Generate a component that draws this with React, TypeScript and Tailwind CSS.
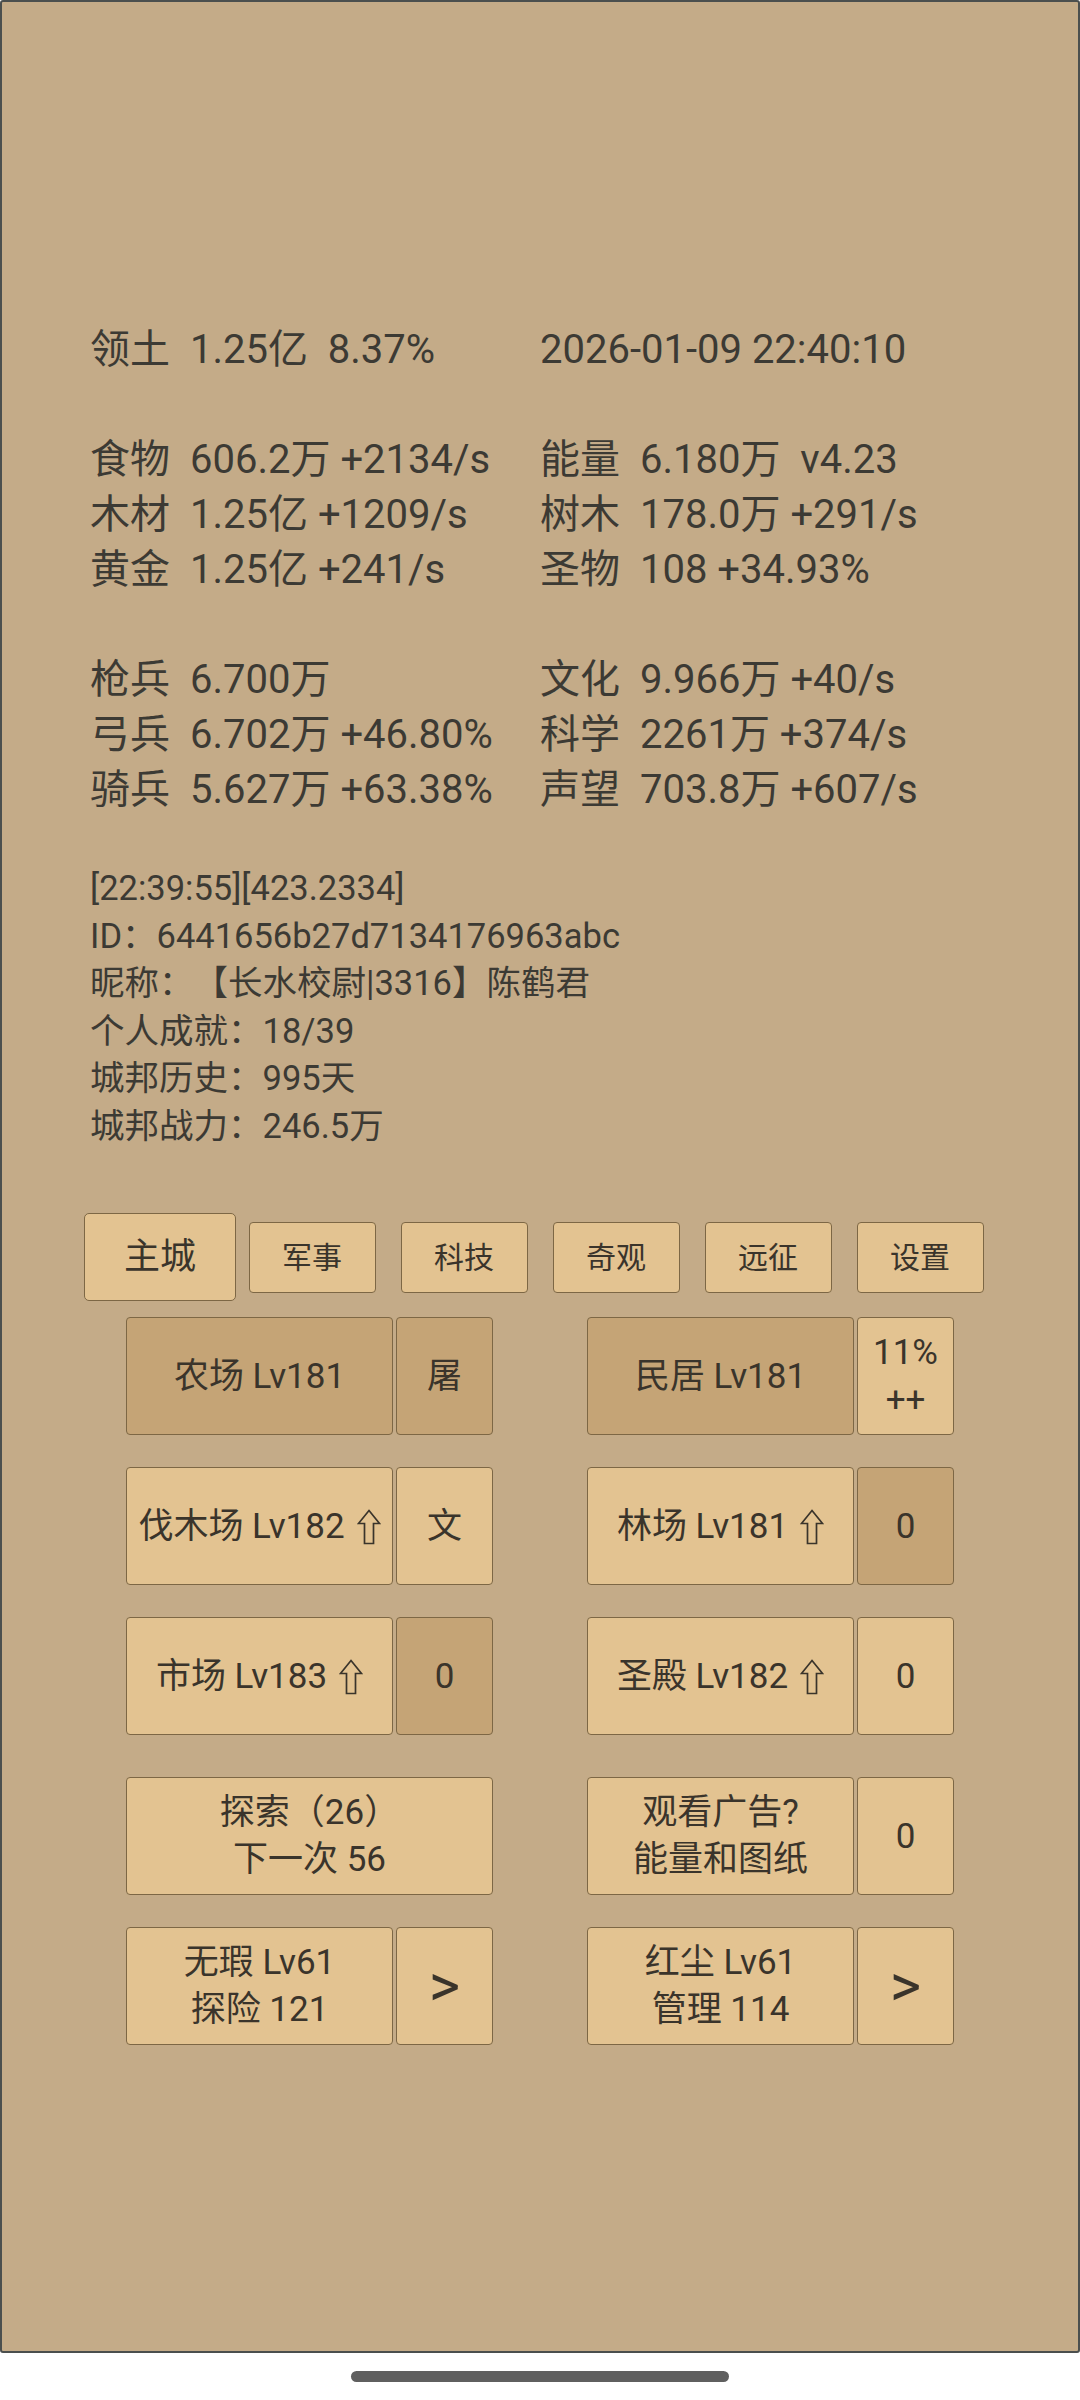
import clsx from 'clsx';
import type { ReactNode } from 'react';

const font = { fontFamily: 'Roboto, "Noto Sans CJK SC", sans-serif' };

type Cell = { label?: string; value: string } | null;

const topRows: [Cell, Cell][] = [
    [{ label: '领土', value: '1.25亿  8.37%' }, { value: '2026-01-09 22:40:10' }],
    [null, null],
    [{ label: '食物', value: '606.2万 +2134/s' }, { label: '能量', value: '6.180万  v4.23' }],
    [{ label: '木材', value: '1.25亿 +1209/s' }, { label: '树木', value: '178.0万 +291/s' }],
    [{ label: '黄金', value: '1.25亿 +241/s' }, { label: '圣物', value: '108 +34.93%' }],
    [null, null],
    [{ label: '枪兵', value: '6.700万' }, { label: '文化', value: '9.966万 +40/s' }],
    [{ label: '弓兵', value: '6.702万 +46.80%' }, { label: '科学', value: '2261万 +374/s' }],
    [{ label: '骑兵', value: '5.627万 +63.38%' }, { label: '声望', value: '703.8万 +607/s' }],
];

const infoLines = [
    '[22:39:55][423.2334]',
    'ID：6441656b27d7134176963abc',
    '昵称：【长水校尉|3316】陈鹤君',
    '个人成就：18/39',
    '城邦历史：995天',
    '城邦战力：246.5万',
];

const tabs = ['主城', '军事', '科技', '奇观', '远征', '设置'];

function StatCell({ cell }: { cell: Cell }) {
    if (!cell) return <div />;
    return (
        <div className="flex whitespace-pre">
            {cell.label && <span className="w-[100px] shrink-0">{cell.label}</span>}
            <span>{cell.value}</span>
        </div>
    );
}

function Btn({ w, dark, children }: { w: string; dark?: boolean; children: ReactNode }) {
    return (
        <div
            className={clsx(
                'flex h-[118px] shrink-0 flex-col items-center justify-center rounded-[4px] border border-[#7d6745] text-center text-[35px] leading-[47px] text-[#3a342b]',
                dark ? 'bg-[#c5a476]' : 'bg-[#e3c391]',
                w
            )}
        >
            {children}
        </div>
    );
}

// upgrade arrow (outlined)
function Up() {
    return (
        <svg viewBox="0 0 24 36" className="ml-[12px] inline-block h-[36px] w-[24px] align-[-7px]">
            <path d="M12 1.5 L22.5 14.5 H16.5 V34.5 H7.5 V14.5 H1.5 Z" fill="none" stroke="#3a342b" strokeWidth="1.7" />
        </svg>
    );
}

function Pair({ main, side, mainDark, sideDark }: { main: ReactNode; side: ReactNode; mainDark?: boolean; sideDark?: boolean }) {
    return (
        <div className="flex w-[367px] gap-[3px]">
            <Btn w="w-[267px]" dark={mainDark}>{main}</Btn>
            <Btn w="w-[97px]" dark={sideDark}>{side}</Btn>
        </div>
    );
}

export default function App() {
    return (
        <div className="flex h-[2400px] flex-col bg-white [text-spacing-trim:space-all]" style={font}>
            <div className="h-[2353px] shrink-0 rounded-[3px] border-2 border-[#4b4f4e] bg-[#c4ab88] text-[#3c3a34]">
                {/* resources */}
                <div className="pl-[88px] pt-[320px] text-[40px] leading-[55px]">
                    {topRows.map((row, i) => (
                        <div key={i} className="grid h-[55px] grid-cols-[450px_1fr]">
                            <StatCell cell={row[0]} />
                            <StatCell cell={row[1]} />
                        </div>
                    ))}
                </div>

                {/* player info */}
                <div className="mt-[48px] pl-[88px] text-[34.5px] leading-[47.5px]">
                    {infoLines.map((line) => (
                        <div key={line}>{line}</div>
                    ))}
                </div>

                {/* tabs */}
                <div className="mt-[63px] flex h-[88px] justify-center">
                    {tabs.map((t, i) => (
                        <div key={t} className="flex w-[152px] items-center justify-center">
                            {i === 0 ? (
                                <div className="flex h-[88px] w-[152px] items-center justify-center rounded-[5px] border border-[#7d6745] bg-[#e3c391] text-[36px] text-[#3a342b]">
                                    {t}
                                </div>
                            ) : (
                                <div className="flex h-[71px] w-[127px] items-center justify-center rounded-[4px] border border-[#7d6745] bg-[#e3c391] text-[30px] text-[#3a342b]">
                                    {t}
                                </div>
                            )}
                        </div>
                    ))}
                </div>

                {/* buildings */}
                <div className="mt-[16px] flex flex-col items-center">
                    <div className="flex gap-[94px]">
                        <Pair main="农场 Lv181" side="屠" mainDark sideDark />
                        <Pair main="民居 Lv181" side={<><span>11%</span><span>++</span></>} mainDark />
                    </div>
                    <div className="mt-[32px] flex gap-[94px]">
                        <Pair main={<span className="whitespace-nowrap">伐木场 Lv182<Up /></span>} side="文" />
                        <Pair main={<span className="whitespace-nowrap">林场 Lv181<Up /></span>} side="0" sideDark />
                    </div>
                    <div className="mt-[32px] flex gap-[94px]">
                        <Pair main={<span className="whitespace-nowrap">市场 Lv183<Up /></span>} side="0" sideDark />
                        <Pair main={<span className="whitespace-nowrap">圣殿 Lv182<Up /></span>} side="0" />
                    </div>
                    <div className="mt-[42px] flex gap-[94px]">
                        <Btn w="w-[367px]">
                            <span>探索（26）</span>
                            <span>下一次 56</span>
                        </Btn>
                        <Pair main={<><span>观看广告?</span><span>能量和图纸</span></>} side="0" />
                    </div>
                    <div className="mt-[32px] flex gap-[94px]">
                        <Pair main={<><span>无瑕 Lv61</span><span>探险 121</span></>} side={<span className="text-[60px] leading-none">&gt;</span>} />
                        <Pair main={<><span>红尘 Lv61</span><span>管理 114</span></>} side={<span className="text-[60px] leading-none">&gt;</span>} />
                    </div>
                </div>
            </div>

            {/* home indicator */}
            <div className="mt-[18px] flex justify-center">
                <div className="h-[11px] w-[378px] rounded-full bg-[#5f5f5f]" />
            </div>
        </div>
    );
}
